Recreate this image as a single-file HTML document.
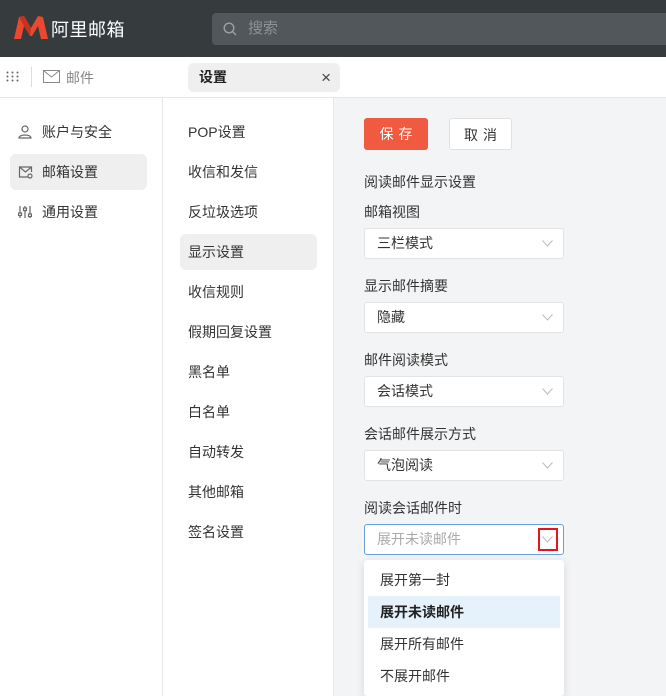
<!DOCTYPE html>
<html><head><meta charset="utf-8">
<style>
*{box-sizing:border-box;margin:0;padding:0}
body{width:666px;height:696px;overflow:hidden;font-family:"Liberation Sans","Noto Sans CJK SC",sans-serif;background:#fff;position:relative;color:#333;font-size:14px}
.hdr{position:absolute;left:0;top:0;width:666px;height:57px;background:#363b3e}
.logo{position:absolute;left:14px;top:15px}
.brand{position:absolute;left:51px;top:16px;color:#fff;font-size:18px;letter-spacing:0.5px}
.search{position:absolute;left:212px;top:13px;width:454px;height:32px;background:#51575b;border-radius:4px 0 0 4px;color:#8c9296;font-size:15px;line-height:32px;padding-left:36px}
.bar{position:absolute;left:0;top:57px;width:666px;height:41px;border-bottom:1px solid #e6e6e6;background:#fff}
.tab{position:absolute;left:188px;top:6px;width:152px;height:29px;background:#efefef;border-radius:5px;font-weight:bold;font-size:14px;line-height:29px;padding-left:11px;color:#222}
.tab span{position:absolute;right:9px;top:0;font-weight:normal;font-size:17px;color:#444}
.left{position:absolute;left:0;top:98px;width:163px;height:598px;border-right:1px solid #e8e8e8}
.mid{position:absolute;left:163px;top:98px;width:171px;height:598px;border-right:1px solid #e8e8e8}
.right{position:absolute;left:334px;top:98px;width:332px;height:598px;background:#f3f4f5}
.li{position:absolute;left:10px;width:137px;height:36px;line-height:36px;padding-left:32px;font-size:14px;color:#333;border-radius:6px}
.li.on{background:#efefef}
.li svg{position:absolute;left:8px;top:11px}
.mi{position:absolute;left:17px;width:137px;height:36px;line-height:36px;padding-left:8px;font-size:14px;color:#333;border-radius:6px}
.mi.on{background:#efefef}
.btn{position:absolute;top:20px;height:32px;line-height:32px;text-align:center;font-size:14px;border-radius:3px;letter-spacing:5px;text-indent:5px}
.lbl{position:absolute;left:30px;font-size:14px;color:#333}
.sel{position:absolute;left:30px;width:200px;height:31px;background:#fff;border:1px solid #e3e3e3;border-radius:3px;line-height:29px;padding-left:12px;font-size:14px;color:#333}
.sel svg{position:absolute;right:10px;top:11px}
.dd{position:absolute;left:30px;top:462px;width:200px;height:136px;background:#fff;border-radius:3px;box-shadow:0 2px 8px rgba(0,0,0,.12)}
.opt{position:absolute;left:4px;width:192px;height:32px;line-height:32px;padding-left:12px;font-size:14px;color:#333}
</style></head><body>
<div class="hdr">
 <svg class="logo" width="34" height="24" viewBox="0 0 34 24"><path d="M0 24 L5 2 L10 1 L17 13 L24 1 L29 2 L34 24 L27 24 L24 11 L18 21 L16 21 L10 11 L7 24Z" fill="#e8492f"/><path d="M5 2 L10 1 L17 13 L16 21 L10 11Z" fill="#c8321d"/></svg>
 <div class="brand">阿里邮箱</div>
 <div class="search"><svg style="position:absolute;left:11px;top:9px" width="14" height="14" viewBox="0 0 14 14"><circle cx="6" cy="6" r="4.8" fill="none" stroke="#9aa0a4" stroke-width="1.4"/><path d="M9.5 9.5 L13 13" stroke="#9aa0a4" stroke-width="1.4"/></svg>搜索</div>
</div>
<div class="bar">
 <svg style="position:absolute;left:6px;top:14px" width="13" height="11"><g fill="#666"><circle cx="1.5" cy="1.5" r="1"/><circle cx="6.5" cy="1.5" r="1"/><circle cx="11.5" cy="1.5" r="1"/><circle cx="1.5" cy="5.5" r="1"/><circle cx="6.5" cy="5.5" r="1"/><circle cx="11.5" cy="5.5" r="1"/><circle cx="1.5" cy="9.5" r="1"/><circle cx="6.5" cy="9.5" r="1"/><circle cx="11.5" cy="9.5" r="1"/></g></svg>
 <div style="position:absolute;left:31px;top:10px;width:1px;height:20px;background:#ddd"></div>
 <svg style="position:absolute;left:43px;top:13px" width="17" height="13" viewBox="0 0 17 13"><rect x="0.5" y="0.5" width="16" height="12" fill="none" stroke="#888"/><path d="M0.5 0.5 L8.5 7 L16.5 0.5" fill="none" stroke="#888"/></svg>
 <div style="position:absolute;left:66px;top:11px;color:#888;font-size:14px">邮件</div>
 <div class="tab">设置<span>×</span></div>
</div>
<div class="left">
 <div class="li" style="top:16px"><svg width="14" height="14" viewBox="0 0 14 14" fill="none" stroke="#666" stroke-width="1.2"><circle cx="7" cy="4" r="3"/><path d="M1 13 C1 9 13 9 13 13Z"/></svg>账户与安全</div>
 <div class="li on" style="top:56px"><svg width="15" height="14" viewBox="0 0 15 14" fill="none" stroke="#666" stroke-width="1.2"><path d="M10 12 H1.5 V2 H13.5 V7"/><path d="M1.5 2 L7.5 7 L13.5 2"/><circle cx="12" cy="11" r="2"/></svg>邮箱设置</div>
 <div class="li" style="top:96px"><svg width="14" height="14" viewBox="0 0 14 14" fill="none" stroke="#666" stroke-width="1.2"><path d="M2 1V13M7 1V13M12 1V13"/><rect x="0.5" y="8" width="3" height="2.5" fill="#fff"/><rect x="5.5" y="3" width="3" height="2.5" fill="#fff"/><rect x="10.5" y="9" width="3" height="2.5" fill="#fff"/></svg>通用设置</div>
</div>
<div class="mid">
 <div class="mi" style="top:16px">POP设置</div>
 <div class="mi" style="top:56px">收信和发信</div>
 <div class="mi" style="top:96px">反垃圾选项</div>
 <div class="mi on" style="top:136px">显示设置</div>
 <div class="mi" style="top:176px">收信规则</div>
 <div class="mi" style="top:216px">假期回复设置</div>
 <div class="mi" style="top:256px">黑名单</div>
 <div class="mi" style="top:296px">白名单</div>
 <div class="mi" style="top:336px">自动转发</div>
 <div class="mi" style="top:376px">其他邮箱</div>
 <div class="mi" style="top:416px">签名设置</div>
</div>
<div class="right">
 <div class="btn" style="left:30px;width:64px;background:#f05a40;color:#fff">保存</div>
 <div class="btn" style="left:115px;width:63px;background:#fff;border:1px solid #e0e0e0;color:#333">取消</div>
 <div class="lbl" style="top:74px">阅读邮件显示设置</div>
 <div class="lbl" style="top:104px">邮箱视图</div>
 <div class="sel" style="top:130px">三栏模式<svg width="11" height="7"><path d="M0.5 0.5L5.5 6L10.5 0.5" fill="none" stroke="#bbb"/></svg></div>
 <div class="lbl" style="top:178px">显示邮件摘要</div>
 <div class="sel" style="top:204px">隐藏<svg width="11" height="7"><path d="M0.5 0.5L5.5 6L10.5 0.5" fill="none" stroke="#bbb"/></svg></div>
 <div class="lbl" style="top:252px">邮件阅读模式</div>
 <div class="sel" style="top:278px">会话模式<svg width="11" height="7"><path d="M0.5 0.5L5.5 6L10.5 0.5" fill="none" stroke="#bbb"/></svg></div>
 <div class="lbl" style="top:326px">会话邮件展示方式</div>
 <div class="sel" style="top:352px">气泡阅读<svg width="11" height="7"><path d="M0.5 0.5L5.5 6L10.5 0.5" fill="none" stroke="#bbb"/></svg></div>
 <div class="lbl" style="top:400px">阅读会话邮件时</div>
 <div class="sel" style="top:426px;border-color:#6a9fd8;color:#aaa">展开未读邮件
  <div style="position:absolute;right:5px;top:3px;width:20px;height:23px;border:2px solid #e4151b"></div>
  <svg width="11" height="7"><path d="M0.5 0.5L5.5 6L10.5 0.5" fill="none" stroke="#bbb"/></svg></div>
 <div class="dd">
  <div class="opt" style="top:4px">展开第一封</div>
  <div class="opt" style="top:36px;background:#e5f1fb;font-weight:bold;color:#222">展开未读邮件</div>
  <div class="opt" style="top:68px">展开所有邮件</div>
  <div class="opt" style="top:100px">不展开邮件</div>
 </div>
</div>
</body></html>
